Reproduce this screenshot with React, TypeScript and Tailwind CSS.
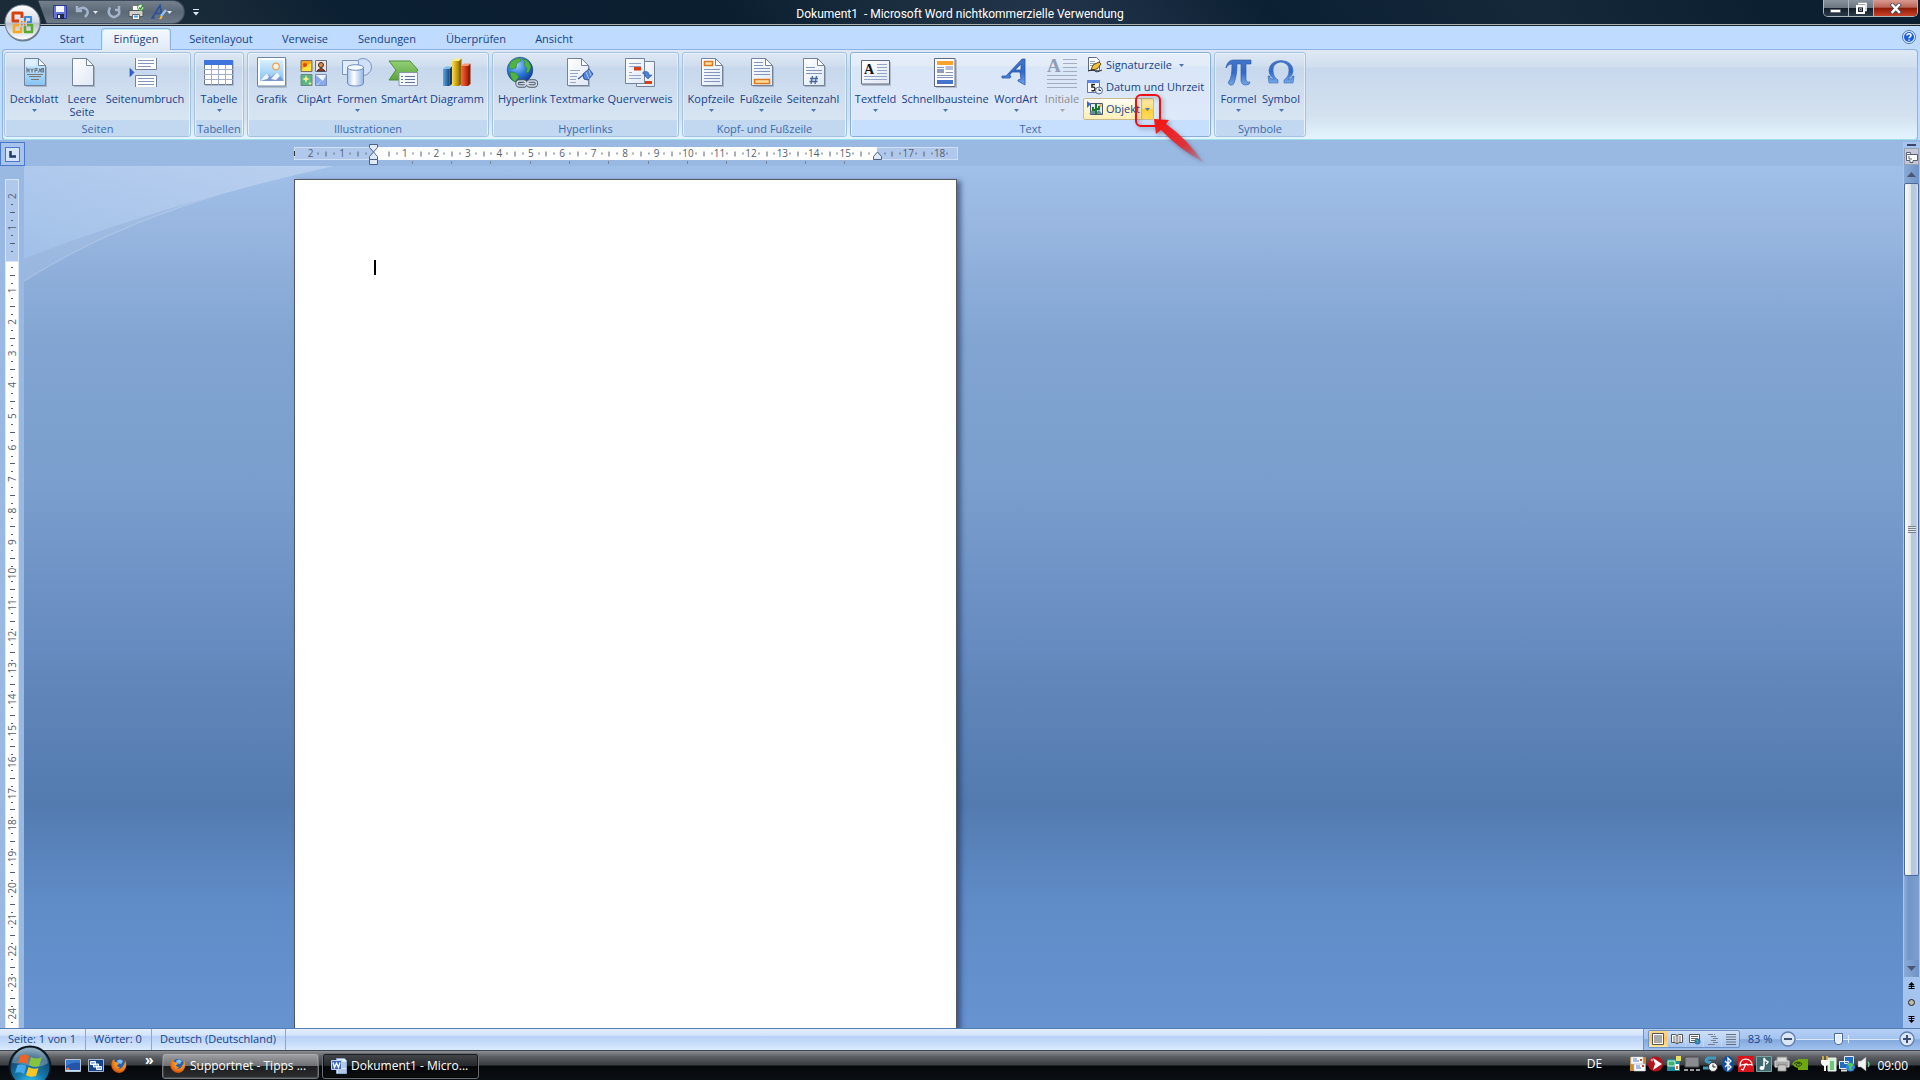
import type { ReactNode } from "react";

const tabs = [
  { label: "Start", width: "w-[58px]" },
  { label: "Einfügen", width: "w-[70px]" },
  { label: "Seitenlayout", width: "w-[100px]" },
  { label: "Verweise", width: "w-[68px]" },
  { label: "Sendungen", width: "w-24" },
  { label: "Überprüfen", width: "w-[82px]" },
  { label: "Ansicht", width: "w-[74px]" },
];

const CM = 31.45;

export default function App() {
  return (
    <div className="flex h-screen flex-col overflow-hidden bg-[#bfdbff] font-['Open_Sans','Noto_Sans',sans-serif] text-[11px] text-[#15428b] select-none">
      <SharedDefs />
      <TitleBar />
      <TabRow />
      <Ribbon />
      <Workspace />
      <StatusBar />
      <Taskbar />
    </div>
  );
}

function SharedDefs() {
  return (
    <svg className="absolute size-0" aria-hidden="true">
      <defs>
        <linearGradient id="paper" x1="0" y1="0" x2="1" y2="1">
          <stop offset="0" stopColor="#fff" />
          <stop offset="1" stopColor="#dfe8f5" />
        </linearGradient>
        <linearGradient id="sky" x1="0" y1="0" x2="0" y2="1">
          <stop offset="0" stopColor="#d9f0ff" />
          <stop offset="1" stopColor="#86c3f3" />
        </linearGradient>
        <linearGradient id="glyph" x1="0" y1="0" x2="0" y2="1">
          <stop offset="0" stopColor="#4476c8" />
          <stop offset="0.5" stopColor="#2f6bcb" />
          <stop offset="1" stopColor="#77a9ea" />
        </linearGradient>
        <linearGradient id="cyl" x1="0" y1="0" x2="1" y2="0">
          <stop offset="0" stopColor="#a9c5ee" />
          <stop offset="0.4" stopColor="#fff" />
          <stop offset="1" stopColor="#8fb2e6" />
        </linearGradient>
        <linearGradient id="green" x1="0" y1="0" x2="0" y2="1">
          <stop offset="0" stopColor="#93cf76" />
          <stop offset="1" stopColor="#5ba53c" />
        </linearGradient>
        <linearGradient id="blueBar" x1="0" y1="0" x2="1" y2="0">
          <stop offset="0" stopColor="#5fa8e6" />
          <stop offset="1" stopColor="#16457e" />
        </linearGradient>
        <linearGradient id="yellowBar" x1="0" y1="0" x2="1" y2="0">
          <stop offset="0" stopColor="#ffe04a" />
          <stop offset="1" stopColor="#a87e00" />
        </linearGradient>
        <linearGradient id="redBar" x1="0" y1="0" x2="1" y2="0">
          <stop offset="0" stopColor="#ff6a40" />
          <stop offset="1" stopColor="#b02305" />
        </linearGradient>
        <radialGradient id="earth" cx="0.38" cy="0.3" r="0.8">
          <stop offset="0" stopColor="#9fd0ff" />
          <stop offset="0.5" stopColor="#2b78dd" />
          <stop offset="1" stopColor="#0a2f86" />
        </radialGradient>
        <radialGradient id="fox" cx="0.6" cy="0.3" r="0.8">
          <stop offset="0" stopColor="#ffc83a" />
          <stop offset="0.6" stopColor="#ee7a16" />
          <stop offset="1" stopColor="#b83c08" />
        </radialGradient>
        <radialGradient id="orb" cx="0.5" cy="0.95" r="0.95">
          <stop offset="0" stopColor="#3ed0f4" />
          <stop offset="0.4" stopColor="#1578ac" />
          <stop offset="0.75" stopColor="#164a70" />
          <stop offset="1" stopColor="#7fa3b8" />
        </radialGradient>
        <linearGradient id="office" x1="0" y1="0" x2="0" y2="1">
          <stop offset="0" stopColor="#fff" />
          <stop offset="0.48" stopColor="#d4dae2" />
          <stop offset="0.52" stopColor="#b6c2d0" />
          <stop offset="1" stopColor="#fff" />
        </linearGradient>
        <linearGradient id="arrowFade" x1="0" y1="0" x2="1" y2="1">
          <stop offset="0" stopColor="#f41212" />
          <stop offset="0.6" stopColor="#ea2a2f" stopOpacity="0.9" />
          <stop offset="1" stopColor="#d04a60" stopOpacity="0.2" />
        </linearGradient>
      </defs>
    </svg>
  );
}

/* ---------- Titelleiste ---------- */

function TitleBar() {
  return (
    <header className="relative z-10 flex h-[26px] shrink-0 border-b border-[#1b242c] bg-[linear-gradient(55deg,#1b2c38_0%,#182a38_12%,#0c2033_18%,#0a1e30_38%,#1c2f40_48%,#22344a_55%,#0c2033_66%,#14283a_80%,#0b1f31_92%)] shadow-[inset_0_-1px_0_#a9b1b2]">
      <button type="button" aria-label="Office-Schaltfläche" className="absolute top-1 left-1">
        <OfficeOrb />
      </button>
      <div className="ml-[38px] flex h-6 w-[147px] items-center rounded-r-full border border-l-0 border-[#39485a] bg-gradient-to-b from-[#74808c] via-[#5b6876] to-[#6d7a88] pl-[15px] [clip-path:polygon(0_0,100%_0,100%_100%,9px_100%)]">
        <button type="button" aria-label="Speichern" className="w-[22px]"><SaveIcon /></button>
        <button type="button" aria-label="Rückgängig" className="flex w-8 items-center gap-1"><UndoIcon /><Caret className="text-[#e4e8ee]" /></button>
        <button type="button" aria-label="Wiederholen" className="w-[21px]"><RedoIcon /></button>
        <button type="button" aria-label="Drucken" className="w-[23px]"><PrintIcon /></button>
        <button type="button" aria-label="Formatvorlage" className="flex items-center"><StyleIcon /><Caret className="text-[#dfe8f8]" /></button>
      </div>
      <button type="button" aria-label="Symbolleiste anpassen" className="ml-2 h-[25px]">
        <svg width="6" height="7" viewBox="0 0 6 7"><path d="M0 .5h6" stroke="#dce6f5" /><path d="M0 3h6L3 6.500z" fill="#dce6f5" /></svg>
      </button>
      <h1 className="pointer-events-none absolute inset-x-0 top-1 text-center font-[Roboto,'Open_Sans',sans-serif] text-[12px] leading-5 whitespace-pre text-white">
        Dokument1  - Microsoft Word nichtkommerzielle Verwendung
      </h1>
      <div className="mr-[2px] ml-auto flex h-[17px] w-[95px] overflow-hidden rounded-b-[5px] border border-t-0 border-[#aeb6bd]">
        <button type="button" aria-label="Minimieren" className="flex w-[25px] items-center justify-center border-r border-[#aeb6bd] bg-[linear-gradient(#89939d_0%,#69757f_50%,#111d29_52%,#2d3c4a_100%)]">
          <svg width="12" height="12"><path d="M.5 7.500h10v3h-10z" fill="#fff" stroke="#4b535c" strokeWidth=".6" /></svg>
        </button>
        <button type="button" aria-label="Verkleinern" className="flex w-[25px] items-center justify-center border-r border-[#aeb6bd] bg-[linear-gradient(#89939d_0%,#69757f_50%,#111d29_52%,#2d3c4a_100%)]">
          <svg width="13" height="13" fill="none"><path d="M4 2.500V1.500h7v7h-1" stroke="#fff" strokeWidth="1.600" /><path d="M2 4h7v7H2z" stroke="#fff" strokeWidth="2" /><path d="M4.500 6.500h2v2h-2z" fill="#222c35" stroke="#fff" strokeWidth=".5" /></svg>
        </button>
        <button type="button" aria-label="Schließen" className="flex flex-1 items-center justify-center bg-[linear-gradient(#d99a8f_0%,#bb6557_45%,#8f1a06_52%,#c8432a_100%)]">
          <svg width="12" height="11"><path d="M2.500 2l6.500 7M9 2L2.500 9" stroke="#434a55" strokeWidth="4" strokeLinecap="square" /><path d="M2.500 2l6.500 7M9 2L2.500 9" stroke="#fff" strokeWidth="2.400" strokeLinecap="square" /></svg>
        </button>
      </div>
    </header>
  );
}

function TabRow() {
  return (
    <nav className="flex h-[23px] shrink-0 pt-[2px] pl-[43px]">
      {tabs.map((tab) => (
        <button
          key={tab.label}
          type="button"
          className={`${tab.width} ${
            tab.label === "Einfügen"
              ? "relative z-10 -mb-px rounded-t-[4px] border border-b-0 border-[#8db2e3] bg-gradient-to-b from-[#f4f9ff] to-[#e1eaf6] shadow-[inset_1px_1px_0_#bff0fb,inset_-1px_0_0_#bff0fb]"
              : "pt-px"
          } flex items-center justify-center whitespace-nowrap`}
        >
          {tab.label}
        </button>
      ))}
      <button type="button" aria-label="Hilfe" className="mr-1 ml-auto flex items-start pt-[2px]">
        <svg width="14" height="14" viewBox="0 0 14 14">
          <circle cx="7" cy="7" r="6.500" fill="#e8f3ff" stroke="#4673c0" />
          <circle cx="7" cy="7" r="5" fill="#1c5fd8" />
          <path d="M5 5.500C5 3.300 9 3.300 9 5.500 9 6.800 7 6.800 7 8.300M7 9.500v1.200" stroke="#fff" strokeWidth="1.500" fill="none" />
        </svg>
      </button>
    </nav>
  );
}

/* ---------- Multifunktionsleiste ---------- */

function Ribbon() {
  return (
    <div className="mr-[2px] ml-[2px] flex h-[91px] shrink-0 gap-[3px] rounded-[4px] border border-[#8db2e3] border-b-[#9fdde9] bg-[linear-gradient(#dfe9f5_0,#d0deee_17px,#c8d8ed_18px,#d3e1ef_66px,#e4f5ff_90px)] px-px pt-[2px] pb-[2px] shadow-[0_1px_0_#8eabcf]">
      <Group label="Seiten" width="w-[187px]">
        <BigButton label="Deckblatt" width="w-14" caret icon={<CoverIcon />} />
        <BigButton label="Leere Seite" width="w-10" icon={<BlankIcon />} />
        <BigButton label="Seitenumbruch" width="w-[86px]" icon={<BreakIcon />} />
      </Group>
      <Group label="Tabellen" width="w-[50px]">
        <BigButton label="Tabelle" width="w-[46px]" caret icon={<TableIcon />} />
      </Group>
      <Group label="Illustrationen" width="w-[242px]">
        <BigButton label="Grafik" width="w-[45px]" icon={<PictureIcon />} />
        <BigButton label="ClipArt" width="w-10" icon={<ClipArtIcon />} />
        <BigButton label="Formen" width="w-[46px]" caret icon={<ShapesIcon />} />
        <BigButton label="SmartArt" width="w-12" icon={<SmartArtIcon />} />
        <BigButton label="Diagramm" width="w-[58px]" icon={<ChartIcon />} />
      </Group>
      <Group label="Hyperlinks" width="w-[187px]">
        <BigButton label="Hyperlink" width="w-[57px]" icon={<HyperlinkIcon />} />
        <BigButton label="Textmarke" width="w-[52px]" icon={<BookmarkIcon />} />
        <BigButton label="Querverweis" width="w-[74px]" icon={<CrossRefIcon />} />
      </Group>
      <Group label="Kopf- und Fußzeile" width="w-[165px]">
        <BigButton label="Kopfzeile" width="w-[54px]" caret icon={<HeaderIcon />} />
        <BigButton label="Fußzeile" width="w-[46px]" caret icon={<FooterIcon />} />
        <BigButton label="Seitenzahl" width="w-[58px]" caret icon={<PageNumberIcon />} />
      </Group>
      <Group label="Text" width="w-[361px]" active>
        <BigButton label="Textfeld" width="w-[47px]" caret icon={<TextBoxIcon />} />
        <BigButton label="Schnellbausteine" width="w-[92px]" caret icon={<QuickPartsIcon />} />
        <BigButton label="WordArt" width="w-[50px]" caret icon={<WordArtIcon />} />
        <BigButton label="Initiale" width="w-[42px]" caret disabled icon={<DropCapIcon />} />
        <div className="flex flex-col pt-px">
          <button type="button" className="flex h-[22px] items-center gap-[3px] px-1">
            <SignatureIcon /> Signaturzeile <Caret className="ml-1 text-[#4a76b4]" />
          </button>
          <button type="button" className="flex h-[22px] items-center gap-[3px] px-1 whitespace-nowrap">
            <DateIcon /> Datum und Uhrzeit
          </button>
          <div className="relative flex h-[22px] w-[71px] rounded-[2px] border border-[#c9b98c] bg-gradient-to-b from-[#fffdf4] to-[#ffeeb4]">
            <button type="button" className="flex flex-1 items-center gap-[3px] pl-[3px]">
              <ObjectIcon /> Objekt
            </button>
            <button type="button" aria-label="Objekt einfügen" className="flex w-3 items-center justify-center border-l border-[#d9b95a] bg-[linear-gradient(#ffe9a8_0%,#ffe17c_48%,#ffcf3e_52%,#ffdb5c_100%)]">
              <Caret className="text-[#4a76b4]" />
            </button>
            <Pointer />
          </div>
        </div>
      </Group>
      <Group label="Symbole" width="w-[92px]">
        <BigButton label="Formel" width="w-[45px]" caret icon={<PiIcon />} />
        <BigButton label="Symbol" width="w-10" caret icon={<OmegaIcon />} />
      </Group>
    </div>
  );
}

function Group({ label, width, active = false, children }: { label: string; width: string; active?: boolean; children: ReactNode }) {
  return (
    <section
      className={`${width} flex shrink-0 flex-col rounded-[3px] border shadow-[inset_0_0_0_1px_rgba(255,255,255,0.45)] ${
        active
          ? "border-[#86aedb] bg-[linear-gradient(#e6eefa_0,#e2ebf8_13px,#d9e6f7_14px,#dfeafa_100%)]"
          : "border-[#a3c2e0] bg-[linear-gradient(rgba(222,232,244,0.8)_0,rgba(207,221,237,0.8)_13px,rgba(199,215,236,0.9)_14px,rgba(216,230,243,0.9)_68px)]"
      }`}
    >
      <div className="flex min-h-0 flex-1 px-px">{children}</div>
      <h2 className={`mx-px h-4 shrink-0 rounded-b-[2px] text-center leading-[18px] whitespace-nowrap text-[#3e6aaa] ${active ? "bg-[#c7dfff]" : "bg-[#c1d8f0]"}`}>{label}</h2>
    </section>
  );
}

function BigButton({
  label,
  width,
  icon,
  caret = false,
  disabled = false,
}: {
  label: string;
  width: string;
  icon: ReactNode;
  caret?: boolean;
  disabled?: boolean;
}) {
  return (
    <button type="button" disabled={disabled} className={`${width} flex shrink-0 flex-col items-center pt-1 leading-[13px] ${disabled ? "text-[#8d8d8d]" : ""}`}>
      {icon}
      <span className={`mt-[3px] ${label.includes(" ") ? "" : "whitespace-nowrap"}`}>{label}</span>
      {caret && <Caret className={`mt-1 ${disabled ? "text-[#a8a8a8]" : "text-[#4a76b4]"}`} />}
    </button>
  );
}

function Caret({ className = "" }: { className?: string }) {
  return (
    <svg width="5" height="3" viewBox="0 0 5 3" className={`shrink-0 ${className}`}>
      <path d="M0 0h5L2.500 3z" fill="currentColor" />
    </svg>
  );
}

function Pointer() {
  return (
    <svg width="72" height="74" viewBox="0 0 72 74" className="pointer-events-none absolute -top-[6px] left-[50px] z-20 drop-shadow-[2px_2px_2px_rgba(0,0,0,0.35)]">
      <rect x="2" y="2" width="24" height="31" rx="5" fill="none" stroke="#f20d12" strokeWidth="2" />
      <path d="M20 26l15 1-3 4q20 14 38 39Q44 55 27 37l-5 4z" fill="url(#arrowFade)" />
    </svg>
  );
}

/* ---------- Arbeitsbereich ---------- */

function Workspace() {
  return (
    <main className="flex min-h-0 flex-1 bg-[#9ab9e2] pt-[2px]">
      <div className="flex min-w-0 flex-1 flex-col">
        <div className="flex h-6 shrink-0">
          <button type="button" aria-label="Tabstopp links" className="flex w-[25px] items-center justify-center border border-[#4a78cc] bg-[#a9c4ec]">
            <span className="flex size-[15px] items-center justify-center border border-[#4a78cc] bg-[#d5e3f6]">
              <svg width="7" height="7"><path d="M1.500 0v5.500H7" stroke="#1f3a68" strokeWidth="2.500" fill="none" /></svg>
            </span>
          </button>
          <HorizontalRuler />
        </div>
        <div className="flex min-h-0 flex-1">
          <div className="w-6 shrink-0 overflow-hidden pt-[13px] pl-[5px]">
            <VerticalRuler />
          </div>
          <div className="relative flex-1 overflow-hidden bg-[linear-gradient(#a0bfe9_0%,#98b6e0_7%,#82a5d2_20%,#7a9ecd_37%,#668bc0_56%,#6186ba_60%,#537bb0_74%,#5f8bc6_85%,#6793d1_100%)]">
            <svg width="310" height="118" viewBox="0 0 310 118" className="absolute top-0 left-0">
              <defs>
                <linearGradient id="swoosh" x1="0" y1="1" x2="1" y2="0">
                  <stop offset="0" stopColor="#a4c3ea" />
                  <stop offset="1" stopColor="#bfd3f1" />
                </linearGradient>
              </defs>
              <path d="M0 0h310Q140 38 0 93z" fill="url(#swoosh)" opacity=".85" />
              <path d="M0 93Q140 38 310 0 115 42 0 115z" fill="#a9c3e6" opacity=".4" />
              <path d="M0 115Q115 42 290 4" fill="none" stroke="#b9cfee" strokeWidth="1.200" opacity=".5" />
            </svg>
            <div className="relative mt-[13px] ml-[270px] flex h-full w-[663px] border border-[#55585f] bg-white pt-20 pl-[79px] shadow-[4px_2px_5px_rgba(30,50,90,0.6)]">
              <span className="h-[15px] w-[2px] bg-black" />
              <textarea aria-label="Dokument" className="h-full w-[500px] resize-none bg-transparent text-[13px] text-black outline-none" />
            </div>
          </div>
        </div>
      </div>
      <ScrollColumn />
    </main>
  );
}

function HorizontalRuler() {
  const origin = 79.5;
  const marks = Array.from({ length: 21 }, (_, i) => i - 2);
  return (
    <svg width="664" height="24" viewBox="0 0 664 24" className="ml-[269px]" fontSize="10" textAnchor="middle" fill="#55606f">
      <rect x=".5" y="5.500" width="663" height="12" fill="#b0c8ec" stroke="#cfe0f6" />
      <rect x="79" y="5" width="504" height="13" fill="#fff" />
      {marks.map((n) => {
        const x = origin + n * CM;
        return (
          <g key={n}>
            {n !== 0 && n !== 16 && n < 19 && <text x={x} y="15">{Math.abs(n)}</text>}
            {n > -2 && n < 19 && <path d={`M${Math.round(x - CM / 4)} 10.500v2`} stroke="#55606f" />}
            {n > -2 && n < 19 && <path d={`M${Math.round(x - CM / 2)} 9.500v5`} stroke="#55606f" />}
            {n < 19 && n !== 0 && <path d={`M${Math.round(x + CM / 4)} 10.500v2`} stroke="#55606f" />}
          </g>
        );
      })}
      <path d="M.5 9v5" stroke="#333" />
      {Array.from({ length: 12 }, (_, i) => (
        <path key={i} d={`M${Math.round(origin + (i + 1) * CM * 1.25) - 0.5} 19v3`} stroke="#7b8797" />
      ))}
      <g fill="#dfe9f7" stroke="#4a6288">
        <path d="M75.500 2.500h8v3l-4 4.500-4-4.500zM75.500 17.500v-3l4-4.500 4 4.500v3zM75.500 17.500h8v5h-8z" />
        <path d="M579.500 17.500v-3l4-4.500 4 4.500v3z" />
      </g>
    </svg>
  );
}

function VerticalRuler() {
  const origin = 80;
  const marks = Array.from({ length: 27 }, (_, i) => i - 2);
  return (
    <svg width="14" height="900" viewBox="0 0 14 900" fontSize="10" textAnchor="middle" fill="#55606f">
      <rect x=".5" y=".5" width="13" height="900" fill="#fff" stroke="#dde8f6" />
      <rect x=".5" y=".5" width="13" height="82" fill="#b0c8ec" stroke="#d6e4f7" />
      {marks.map((n) => {
        const y = origin + n * CM;
        return (
          <g key={n}>
            {n !== 0 && <text transform={`translate(11 ${y}) rotate(-90)`}>{Math.abs(n)}</text>}
            {n !== -2 && <path d={`M6 ${Math.round(y - CM / 4)}.500h2`} stroke="#55606f" />}
            {n !== -2 && <path d={`M5 ${Math.round(y - CM / 2)}.500h5`} stroke="#55606f" />}
            <path d={`M6 ${Math.round(y + CM / 4)}.500h2`} stroke="#55606f" />
          </g>
        );
      })}
    </svg>
  );
}

function ScrollColumn() {
  return (
    <div className="flex w-[17px] shrink-0 flex-col border-l border-[#a9c6ee] bg-[#a5c3ef] pr-px">
      <div className="mx-[3px] mt-[2px] mb-[2px] h-[2px] shrink-0 bg-[#3d4668]" />
      <button type="button" aria-label="Lineal" className="flex h-[17px] items-center justify-center border border-[#9aa0b4] bg-[#c3c9d6]">
        <svg width="12" height="12" fill="#fff" stroke="#5b6076"><path d="M.5 3.500h4v-2h-4zM4 3.500h7.500v6H7v2H4v-2H.500v-6" /><path d="M3 5v3h3" fill="none" /></svg>
      </button>
      <button type="button" aria-label="Nach oben" className="flex h-[18px] items-center justify-center bg-gradient-to-r from-[#8aaad6] to-[#6f93c6]">
        <svg width="9" height="5"><path d="M0 5l4.500-5L9 5z" fill="#4b5674" /></svg>
      </button>
      <div className="flex flex-1 flex-col bg-[linear-gradient(90deg,#8faedb,#7195c6_30%,#7f9fcc)]">
        <div className="flex flex-[892] items-center justify-center rounded-[2px] border border-[#4d679b] bg-[linear-gradient(90deg,#fbfcfe_0%,#dfe5ec_45%,#b7c7dd_50%,#b9c9e0_85%,#dfe9f5_100%)]">
          <div className="h-[7px] w-2 bg-[repeating-linear-gradient(#7d828b_0,#7d828b_1px,#dfe3ea_1px,#dfe3ea_2px)]" />
        </div>
        <div className="flex-[108]" />
      </div>
      <button type="button" aria-label="Nach unten" className="flex h-[17px] items-center justify-center bg-gradient-to-r from-[#8aaad6] to-[#6f93c6]">
        <svg width="9" height="5"><path d="M0 0h9L4.500 5z" fill="#4b5674" /></svg>
      </button>
      <button type="button" aria-label="Vorherige Seite" className="flex h-[17px] items-center justify-center">
        <svg width="7" height="7"><path d="M3.500 0l3 3h-6zM2.500 3h2v1h2L3.500 3l-3 1h2z" /><path d="M3.500 2v4M.5 4.500h6M.5 6.500h6" stroke="#000" /></svg>
      </button>
      <button type="button" aria-label="Browseobjekt auswählen" className="flex h-[17px] items-center justify-center">
        <svg width="7" height="7"><circle cx="3.500" cy="3.500" r="3" fill="#b9b9b0" stroke="#222" /></svg>
      </button>
      <button type="button" aria-label="Nächste Seite" className="flex h-[17px] items-center justify-center">
        <svg width="7" height="7"><path d="M3.500 7l3-3h-6z" /><path d="M3.500 1v4M.5 2.500h6M.5 .5h6" stroke="#000" /></svg>
      </button>
    </div>
  );
}

/* ---------- Statusleiste ---------- */

function StatusBar() {
  return (
    <footer className="flex h-[22px] shrink-0 border-t border-[#567db1] bg-[linear-gradient(#e3eefd_0%,#d3e4fb_30%,#b8d1f6_36%,#c3daf9_60%,#dbe9fc_100%)]">
      <div className="w-[86px] border-r border-[#86a9d6] pl-2 leading-5">Seite: 1 von 1</div>
      <div className="w-[66px] border-r border-[#86a9d6] pl-2 leading-5">Wörter: 0</div>
      <div className="w-[134px] border-r border-[#86a9d6] pl-2 leading-5">Deutsch (Deutschland)</div>
      <div className="ml-auto flex items-center border-l border-[#6b93c9] bg-[linear-gradient(#b5d0f7_0%,#a5c4f0_45%,#83a9dd_52%,#a3c3f0_100%)] pr-[5px] pb-px pl-1">
        <div className="flex h-[18px] rounded-[2px] border border-[#6d93c6] bg-[linear-gradient(#cfe0f7,#a9c6ef)]">
          <button type="button" aria-label="Seitenlayout" className="flex w-[18px] items-center justify-center bg-[linear-gradient(#fbd78c,#ffc152_50%,#ffe6a0)]">
            <svg width="12" height="12"><path d="M.5.5h11v11H.5z" fill="#fff" stroke="#555" /><path d="M2 3h8M2 5h8M2 7h8M2 9h8" stroke="#555" /></svg>
          </button>
          <button type="button" aria-label="Vollbild-Lesemodus" className="flex w-[18px] items-center justify-center border-l border-[#c7daf4]">
            <svg width="12" height="12"><path d="M.5 1.500H4l2 1 2-1h3.500v8H8l-2 1.500-2-1.500H.5zM6 2.500V11" fill="#fff" stroke="#555" /><path d="M2 4h2.500M2 6h2.500M2 8h2.500M7.500 4H10M7.500 6H10M7.500 8H10" stroke="#666" /></svg>
          </button>
          <button type="button" aria-label="Weblayout" className="flex w-[18px] items-center justify-center border-l border-[#c7daf4]">
            <svg width="12" height="12"><path d="M.5 1.500h10v8H.5z" fill="#fff" stroke="#555" /><path d="M2 3.500h7M2 5.500h7M2 7.500h4" stroke="#666" /><circle cx="8.500" cy="8.500" r="3" fill="#2b78b8" /><path d="M7 7l2 1-1 2" stroke="#5ec04e" fill="none" /></svg>
          </button>
          <button type="button" aria-label="Gliederung" className="flex w-[18px] items-center justify-center border-l border-[#c7daf4]">
            <svg width="12" height="12"><path d="M1 1.500h5M7 1.500h1M4 3.500h5M6 5.500h5M4 7.500h5M6 9.500h5M1 11.500h7" stroke="#777f8c" /></svg>
          </button>
          <button type="button" aria-label="Entwurf" className="flex w-[18px] items-center justify-center border-l border-[#c7daf4]">
            <svg width="12" height="12"><path d="M1 1.500h10M1 4h10M1 6.500h10M1 9h10M1 11.500h10" stroke="#666f7c" /></svg>
          </button>
        </div>
        <button type="button" className="w-10 text-center">83 %</button>
        <button type="button" aria-label="Verkleinern">
          <svg width="16" height="16"><circle cx="8" cy="8" r="7" fill="#dbe7f7" stroke="#5f7fb0" strokeWidth="1.300" /><path d="M4 8h8" stroke="#3c4f72" strokeWidth="2" /></svg>
        </button>
        <div className="relative flex w-[103px] items-center">
          <span className="absolute inset-x-0 h-px bg-[#dceafc]" />
          <span className="absolute left-1/2 h-2 w-px bg-[#dceafc]" />
          <input
            type="range"
            aria-label="Zoom"
            defaultValue={40}
            className="relative h-4 w-full appearance-none bg-transparent [&::-webkit-slider-thumb]:h-3 [&::-webkit-slider-thumb]:w-[9px] [&::-webkit-slider-thumb]:appearance-none [&::-webkit-slider-thumb]:rounded-b-[4px] [&::-webkit-slider-thumb]:border [&::-webkit-slider-thumb]:border-[#4b6a9c] [&::-webkit-slider-thumb]:bg-[#e3ecf9] [&::-webkit-slider-thumb]:shadow-[inset_0_0_0_1px_white]"
          />
        </div>
        <button type="button" aria-label="Vergrößern">
          <svg width="16" height="16"><circle cx="8" cy="8" r="7" fill="#dbe7f7" stroke="#5f7fb0" strokeWidth="1.300" /><path d="M4 8h8M8 4v8" stroke="#3c4f72" strokeWidth="2" /></svg>
        </button>
      </div>
    </footer>
  );
}

/* ---------- Taskleiste ---------- */

function Taskbar() {
  return (
    <div className="relative flex h-[30px] shrink-0 items-center border-t border-[#3d4650] bg-[linear-gradient(#8b8f94_0%,#5b5f64_20%,#3a3d41_48%,#05080b_52%,#0a0f14_100%)] text-[12px] text-white">
      <button type="button" aria-label="Start" className="absolute -top-[6px] left-2">
        <StartOrb />
      </button>
      <div className="ml-[65px] flex items-center gap-[7px]">
        <button type="button" aria-label="Desktop anzeigen">
          <svg width="16" height="14"><path d="M.5.500h15v12H.5z" fill="#3a78d0" stroke="#b8c4d2" /><path d="M1 7q7-5 14-3v8H1z" fill="#2555a8" /><circle cx="3" cy="10" r="1.500" fill="#f0742a" /><path d="M1 11.500h14" stroke="#bfe0ff" /></svg>
        </button>
        <button type="button" aria-label="Fenster umschalten">
          <svg width="16" height="14"><path d="M.5.500h15v12H.5z" fill="#16458c" stroke="#a8b6c8" /><path d="M2.500 2.500h5v3h-5zM5.500 5h5v3h-5zM8.500 7.500h5v3h-5z" fill="#8fb8ec" stroke="#fff" /></svg>
        </button>
        <button type="button" aria-label="Firefox"><FirefoxIcon /></button>
      </div>
      <button type="button" aria-label="Weitere" className="mb-3 ml-[18px] h-4 w-2 text-[14px] leading-4 font-bold">»</button>
      <div className="ml-[9px] flex gap-[3px]">
        <button type="button" className="flex h-[26px] w-[157px] items-center gap-1 rounded-[3px] border border-[#74787c] bg-[linear-gradient(#a0a2a5_0%,#6e7073_48%,#1c1e20_52%,#2c2e31_100%)] pl-[7px] shadow-[inset_0_0_0_1px_rgba(255,255,255,0.15)]">
          <FirefoxIcon /> Supportnet - Tipps ...
        </button>
        <button type="button" className="flex h-[26px] w-[157px] items-center gap-1 rounded-[3px] border border-[#6a6e73] bg-[linear-gradient(#45484c_0%,#26282b_48%,#050607_52%,#0c0d0e_100%)] pl-2 shadow-[inset_0_0_0_1px_rgba(0,0,0,0.6)]">
          <svg width="16" height="16"><path d="M5.500.500h8l2 2v13h-10z" fill="#e6eefa" stroke="#8fa9d6" /><path d="M11 5h4M11 7h4M11 9h4M7 12h8M7 14h8" stroke="#7f9fd0" /><path d="M.5 2.500h10v9H.5z" fill="#3c68bd" stroke="#bcd0f0" /><path d="M2 4.500l1.500 5L5.500 5l2 4.500 1.500-5" stroke="#fff" strokeWidth="1.300" fill="none" /></svg>
          Dokument1 - Micro...
        </button>
      </div>
      <button type="button" className="mr-7 mb-1 ml-auto w-4 text-center">DE</button>
      <TrayIcons />
      <time className="mr-3 ml-1 leading-4">09:00</time>
    </div>
  );
}

function TrayIcons() {
  return (
    <div className="flex items-center gap-[2px] pb-1">
      <svg width="16" height="16"><path d="M0 1h16v14H0z" fill="#c98a30" /><path d="M1 1h12v7H1zM4 8h11v7H4z" fill="#fff" stroke="#b9c4d6" strokeWidth=".6" /><path d="M3 3h4M3 5h6M6 10h4M6 12h5" stroke="#4c79c6" /><path d="M10 4h2M12 10h2" stroke="#d8462a" strokeWidth="2" /></svg>
      <svg width="16" height="16"><circle cx="7.500" cy="8" r="7.500" fill="#b4121c" /><path d="M5 2l9 6-9 6 2-6z" fill="#fff" /><circle cx="4" cy="4" r="1.500" fill="#e58a8a" /></svg>
      <svg width="16" height="16"><path d="M1 3h13v12H1z" fill="#1e8c98" /><path d="M2 5h7v5H2z" fill="#36b46c" stroke="#d0f0e6" /><path d="M10 0h5v5h-5z" fill="#e8e06a" /><path d="M9 8h4v6H9z" fill="#fff" /><path d="M10 10h2v3h-2z" fill="#e0662a" /></svg>
      <svg width="16" height="16"><path d="M1 1h14v10H1z" fill="#8a8b8e" stroke="#4a4b4e" /><path d="M0 14h4M6 14h4M12 14h4" stroke="#9b9ca0" strokeWidth="2" /></svg>
      <svg width="16" height="16"><path d="M14 2H6q-4 3 0 4l6 2q2 3-3 4H1" stroke="#3e9ac4" strokeWidth="3" fill="none" /><circle cx="11" cy="11" r="4.500" fill="#f4f4f4" stroke="#333" /><path d="M11 8.500V11h2.500" stroke="#222" fill="none" /></svg>
      <svg width="16" height="16"><ellipse cx="8" cy="8" rx="6" ry="8" fill="#12509c" /><path d="M5 5l6 6-3 3V2l3 3-6 6" stroke="#fff" strokeWidth="1.300" fill="none" /></svg>
      <svg width="16" height="16"><path d="M0 0h16v16H0z" fill="#d8141c" /><path d="M2 10Q2 3 8 3q6 1 6 6-2-1-4 0-2-2-4 0-2-1-4 1zM8 8l-3 6-2-1" stroke="#fff" strokeWidth="1.200" fill="none" /></svg>
      <svg width="16" height="16"><path d="M.5.500h15v15H.5z" fill="#3f6a70" stroke="#7da0a0" /><path d="M8 11V2q1 3 4 4-1 2-2 2" stroke="#fff" strokeWidth="1.500" fill="none" /><ellipse cx="6" cy="12" rx="2.500" ry="2" fill="#fff" /></svg>
      <svg width="16" height="16"><path d="M3 1h10v5H3z" fill="#d9d9d9" stroke="#888" /><path d="M1 5h14v6H1z" fill="#a9a9ab" stroke="#dadada" /><path d="M4 9h8v6H4z" fill="#f4f4f4" stroke="#777" /><path d="M5 11h6M5 13h6" stroke="#999" /></svg>
      <svg width="16" height="16"><path d="M6 3h10v11H6z" fill="#6fa80e" /><path d="M0 8q4-5 8-4t5 4q-3 5-7 4T0 8z" fill="#6fa80e" /><path d="M2 8q4-4 8 0-3 4-6 1 1-3 4-1" stroke="#203a08" fill="none" /></svg>
      <svg width="16" height="16" className="ml-[11px]"><path d="M7 2h8v13H7z" fill="#d7f0d8" stroke="#eee" /><path d="M9 5h4v9H9z" fill="#6fc57a" /><path d="M2 0v5M6 0v5" stroke="#f0c040" strokeWidth="1.500" /><path d="M0 4h8v3q-1 3-3 3v5H3v-5Q1 10 0 7z" fill="#f5f5f5" /></svg>
      <svg width="16" height="16"><path d="M5.500.500h9v7h-9zM.5 5.500h9v7h-9z" fill="#1f6cc0" stroke="#e6eef8" /><path d="M2 14.500h6" stroke="#ddd" strokeWidth="2" /><circle cx="11.500" cy="11" r="4.500" fill="#2a86e0" /><path d="M9 9q3-2 4 0l-2 2 1 3" stroke="#5ccf4a" strokeWidth="2" fill="none" /></svg>
      <svg width="16" height="16"><path d="M1 5h3l5-4v14l-5-4H1z" fill="#f2f2f2" stroke="#888" strokeWidth=".5" /><path d="M11 6q2 2 0 5" stroke="#6fdc8a" strokeWidth="1.300" fill="none" /></svg>
    </div>
  );
}

/* ---------- Symbole ---------- */

function Icon({ children, size = 32 }: { children: ReactNode; size?: number }) {
  return (
    <svg width={size} height={size} viewBox={`0 0 ${size} ${size}`} fill="none" className="shrink-0 overflow-visible">
      {children}
    </svg>
  );
}

function Sheet({ fill = "url(#paper)" }: { fill?: string }) {
  return (
    <>
      <path d="M8 3h14l7 7v20H8z" fill="#000" opacity=".18" />
      <path d="M6.500 1.500h14l7 7v20h-21z" fill={fill} stroke="#74839c" />
      <path d="M20.500 1.500v7h7z" fill="#fff" stroke="#74839c" />
    </>
  );
}

function CoverIcon() {
  return (
    <Icon>
      <Sheet fill="url(#sky)" />
      <path d="M8 3h10v6H8z" fill="#e8f5ff" opacity=".6" />
      <path d="M9 15.500v-4l2 3v-3m1.500 0l1.500 2 1.500-2m-1.500 2v2m3-4h2v2h-2m0-2v4m4-4l2.500 4m0-4L20 15.500m4 0v-4h1.500v4" stroke="#6a7686" strokeWidth="1.100" />
      <path d="M9 17.500h16M11 19.500h12M13 22.500h8" stroke="#7d776f" />
    </Icon>
  );
}

function BlankIcon() {
  return <Icon><Sheet /></Icon>;
}

function BreakIcon() {
  return (
    <Icon>
      <path d="M6.500 1v11.500h21V1" fill="#fff" stroke="#74839c" />
      <path d="M6.500 30V18.500h21V30" fill="#fff" stroke="#74839c" />
      <path d="M9 3.500h16M9 6.500h16M9 9.500h13M9 21.500h16M9 24.500h16M9 27.500h16" stroke="#8296bc" />
      <path d="M1 11.500l4 4-4 4z" fill="#2f62d0" stroke="#1a3f98" strokeWidth=".6" />
    </Icon>
  );
}

function TableIcon() {
  return (
    <Icon>
      <path d="M2 4h29v25H2z" fill="#000" opacity=".15" />
      <path d="M1.500 3.500h28v24h-28z" fill="#fff" stroke="#6b7994" />
      <path d="M1 3h29v5H1z" fill="#3f74dc" />
      <path d="M1 12.500h29M1 17.500h29M1 22.500h29M8.500 8v20M15.500 8v20M22.500 8v20" stroke="#a1adc4" />
    </Icon>
  );
}

function PictureIcon() {
  return (
    <Icon>
      <path d="M2 2h29v29H2z" fill="#000" opacity=".15" />
      <path d="M1.500.500h28v28.500h-28z" fill="#fff" stroke="#6f87a0" />
      <path d="M4 3h23.500v21H4z" fill="url(#sky)" />
      <circle cx="20" cy="9.500" r="3.300" fill="#fff3d8" stroke="#eaa46a" strokeWidth="1.300" />
      <path d="M4 24l7-8 4 4 6-5 7 9z" fill="#7c99d6" />
      <path d="M4 24l7-8 2 4-2 2zM15 22l6-7 3 4-4 4z" fill="#eef5ff" />
    </Icon>
  );
}

function ClipArtIcon() {
  return (
    <Icon>
      <path d="M3 3.500h11v11H3z" fill="#f8a51b" stroke="#7b6c66" />
      <path d="M4 12l9-6v8H4z" fill="#ffe23e" /><circle cx="7" cy="8" r="2" fill="#d84a0c" />
      <path d="M17.500 3.500h11v11h-11z" fill="#f2e4d8" stroke="#64708a" />
      <circle cx="23" cy="8" r="2.500" fill="#d98c4a" stroke="#3c2c25" /><path d="M19 14q4-5 8 0z" fill="#c2401c" stroke="#3c2c25" />
      <path d="M3 17.500h11v11H3z" fill="#5ab488" stroke="#6b8a80" />
      <path d="M8 18l1 3 3 1-3 1-1 3-1-3-3-1 3-1zM12 24l.5 2 1.500.5-1.500.5-.5 1.500-.5-1.500L10 26.500l1.500-.5z" fill="#fff38a" />
      <path d="M17.500 17.500h11v11h-11z" fill="#c3d6fb" stroke="#7b8fb6" />
      <path d="M18 18l6 5-6 5zM28 18v10h-8z" fill="#88a8ec" /><path d="M18 18l7 6 3-6z" fill="#eef4ff" />
    </Icon>
  );
}

function ShapesIcon() {
  return (
    <Icon>
      <circle cx="22" cy="10" r="8.500" fill="#cfe0f8" stroke="#7b95c0" />
      <path d="M1.500 3.500h16v14h-16z" fill="#e2edfb" stroke="#7b95c0" />
      <path d="M6.500 10v16q0 3 8 3t8-3V10z" fill="url(#cyl)" stroke="#6f8cba" />
      <ellipse cx="14.500" cy="10.500" rx="8" ry="2.800" fill="#f4f9ff" stroke="#6f8cba" />
    </Icon>
  );
}

function SmartArtIcon() {
  return (
    <Icon>
      <path d="M1 4h21l8 9-8 10H1l7-10z" fill="url(#green)" stroke="#4f8f38" />
      <path d="M11 15.500h18.500v13H11z" fill="#f4f7fc" stroke="#8b96ac" />
      <path d="M13 19.500h2M13 22.500h2M13 25.500h2M17 19.500h10M17 22.500h10M17 25.500h10" stroke="#64739a" />
    </Icon>
  );
}

function ChartIcon() {
  return (
    <Icon>
      <path d="M2 12l3-2.500h6L8.500 12z" fill="#7fbaf0" />
      <path d="M2 12h6.500v17H2z" fill="url(#blueBar)" /><path d="M8.500 12L11 9.500V27l-2.500 2z" fill="#123a6c" />
      <path d="M11 4l3-2.500h6.500L18 4z" fill="#ffef80" />
      <path d="M11 4h7v25h-7z" fill="url(#yellowBar)" /><path d="M18 4l2.500-2.500V27L18 29z" fill="#8a6600" />
      <path d="M20 9l3-2.500h6.500L27 9z" fill="#ff9470" />
      <path d="M20 9h7v20h-7z" fill="url(#redBar)" /><path d="M27 9l2.500-2.500V27L27 29z" fill="#8c1c05" />
    </Icon>
  );
}

function HyperlinkIcon() {
  return (
    <Icon>
      <circle cx="13" cy="13" r="12.800" fill="url(#earth)" stroke="#123a78" strokeWidth=".6" />
      <path d="M3 6q5-5 10-5l1 3-4 2-1 5-5 1-2-2zM15 2q7 0 9 8l-2 5-3 1 1-5-3-3 1-3zM3 15l6 1 3 4-4 5q-5-3-5-10z" fill="#4fb440" stroke="#2a7c2c" strokeWidth=".5" />
      <g stroke="#4a5666" strokeWidth="3.400"><rect x="10" y="24" width="9" height="5" rx="2.500" /><rect x="20.500" y="24" width="9" height="5" rx="2.500" /><path d="M16 26.500h8" /></g>
      <g stroke="#d3dbe6" strokeWidth="1.500"><rect x="10" y="24" width="9" height="5" rx="2.500" /><rect x="20.500" y="24" width="9" height="5" rx="2.500" /><path d="M16 26.500h8" /></g>
    </Icon>
  );
}

function BookmarkIcon() {
  return (
    <Icon>
      <Sheet />
      <path d="M9 13.500h10M9 16.500h8M9 19.500h7M9 22.500h6M9 25.500h6" stroke="#93a5c8" />
      <path d="M17 22l8-6" stroke="#3f5fa8" strokeWidth="1.500" />
      <path d="M22 17l6-5 4 5-5 6-4-1z" fill="#5584d8" stroke="#2c4f9c" />
      <path d="M25 15l3 7M28 13l2 6" stroke="#a9c6f4" />
    </Icon>
  );
}

function CrossRefIcon() {
  return (
    <Icon>
      <path d="M12.500 4.500h18v25h-18z" fill="url(#paper)" stroke="#74839c" />
      <path d="M20 24h8v3h-8z" fill="#d63f17" />
      <path d="M1.500 1.500h19v25h-19z" fill="url(#paper)" stroke="#74839c" />
      <path d="M5 6.500h12M5 9.500h12M5 15.500h3M5 18.500h12M5 21.500h12" stroke="#93a5c8" />
      <path d="M10 10h7v3.500h-7z" fill="#d63f17" />
      <path d="M19 15q6-2 6 3h3l-4 4-4-4h2q0-2-3-1z" fill="#4c7fd8" stroke="#2a539e" strokeWidth=".6" />
    </Icon>
  );
}

function HeaderIcon() {
  return (
    <Icon>
      <Sheet />
      <path d="M9.500 4.500h8v4h-8z" fill="#ffdca0" stroke="#d97a1e" strokeWidth="1.500" />
      <path d="M9 12.500h16M9 15.500h16M9 18.500h16M9 21.500h16M9 24.500h16" stroke="#8296bc" />
    </Icon>
  );
}

function FooterIcon() {
  return (
    <Icon>
      <Sheet />
      <path d="M9 5.500h9M9 8.500h9M9 11.500h16M9 14.500h16M9 17.500h16" stroke="#8296bc" />
      <path d="M9.500 22.500h15v4h-15z" fill="#ffdca0" stroke="#d97a1e" strokeWidth="1.500" />
    </Icon>
  );
}

function PageNumberIcon() {
  return (
    <Icon>
      <Sheet />
      <path d="M9 10.500h9M9 13.500h16M9 16.500h16" stroke="#8296bc" />
      <path d="M15.500 19l-1.500 8M19.500 19L18 27M13 21.500h8M12.500 24.500h8" stroke="#46649c" strokeWidth="1.300" />
    </Icon>
  );
}

function TextBoxIcon() {
  return (
    <Icon>
      <path d="M2 5h29v24H2z" fill="#000" opacity=".18" />
      <path d="M1.500 3.500h28v23.500h-28z" fill="url(#paper)" stroke="#5d6a80" />
      <text x="4" y="17" fontSize="14" fontWeight="700" fontFamily="Liberation Serif" fill="#111">A</text>
      <path d="M17 7.500h10M17 10.500h10M17 13.500h10M17 16.500h10M4 19.500h23M4 22.500h23" stroke="#93a5c8" />
    </Icon>
  );
}

function QuickPartsIcon() {
  return (
    <Icon>
      <path d="M7 3h21v28H7z" fill="#000" opacity=".18" />
      <path d="M5.500 1.500h20.500v28H5.500z" fill="#fff" stroke="#5d6a80" />
      <path d="M8 4h16v4H8z" fill="#fba22c" />
      <path d="M8 12h7v4H8z" fill="#8e9cc0" /><path d="M16.500 9h7.500v4h-7.500z" fill="#b0bcd8" />
      <path d="M8 10.500h7M16.500 15.500H24M8 18.500h16M8 20.500h16" stroke="#8296bc" />
      <path d="M8 23h16v4H8z" fill="#4474d0" />
    </Icon>
  );
}

function WordArtIcon() {
  return (
    <Icon>
      <path d="M22 2L6 19l-4 0v2h8l1-2h-2l3-4h8l1 7-3 1v1l7 4V2zM21 7v6h-6z" fill="url(#glyph)" stroke="#2c56a4" strokeWidth=".8" />
    </Icon>
  );
}

function DropCapIcon() {
  return (
    <Icon>
      <text x="1" y="15" fontSize="19" fontWeight="700" fontFamily="Liberation Serif" fill="#929db4">A</text>
      <path d="M17 2.500h14M17 6.500h14M17 10.500h14M17 14.500h14M1 18.500h30M1 22.500h30M1 26.500h30M1 30.500h30" stroke="#a5aec0" />
    </Icon>
  );
}

function PiIcon() {
  return (
    <Icon>
      <path d="M3 10Q5 3 10 3h18v4h-5v16q0 3 4 2 0 3-4 3-5 0-5-5V7h-4q0 12-3 19-1 3-4 2-3-2-1-4 3-3 3-17-4 0-6 4z" fill="url(#glyph)" stroke="#2c56a4" strokeWidth=".6" />
    </Icon>
  );
}

function OmegaIcon() {
  return (
    <Icon>
      <path d="M3 19l1 7h9v-3Q8 20 8 13q0-7 8-8 8 1 8 8 0 7-5 10v3h9l1-7h-1.500q-.5 3-3 3H23q5-3 5-9-1-9-12-9.500Q5 4 4 13q0 6 5 9H7.500q-2.500 0-3-3z" fill="url(#glyph)" stroke="#3c68b4" strokeWidth=".6" />
    </Icon>
  );
}

function SignatureIcon() {
  return (
    <Icon size={16}>
      <path d="M1.500.500h8l3 3v10h-11z" fill="#fff" stroke="#5c6c86" />
      <path d="M3 4.500h5M3 6.500h7M3 8.500h4" stroke="#93a5c8" />
      <path d="M4 13l2-5 6-3 2 2-4 5z" fill="#f2c33c" stroke="#5f4a12" />
      <path d="M1 14q6-2 7 0t7-1" stroke="#222" />
    </Icon>
  );
}

function DateIcon() {
  return (
    <Icon size={16}>
      <path d="M.5 1.500h12v12H.5z" fill="#fff" stroke="#5c78b4" /><path d="M0 1h13v3H0z" fill="#5d8ade" />
      <path d="M8 5.500H5v2.500q3-.5 3 2t-3.500 1.500" stroke="#222" strokeWidth="1.500" />
      <circle cx="12" cy="11.500" r="3.500" fill="#e8f0fc" stroke="#53699a" /><path d="M12 9.500v2h2" stroke="#334" />
    </Icon>
  );
}

function ObjectIcon() {
  return (
    <Icon size={16}>
      <path d="M3.500 2.500h12v11h-12z" fill="#dcecf7" stroke="#4c5a6e" />
      <path d="M0 0l4 3-4 4z" fill="#3a6ad0" />
      <path d="M2 13l4-5 3 4 3-3 3 4z" fill="#6b8c9c" />
      <path d="M9 3v10M6 6v3h3M12 5v3H9" stroke="#1b7a2a" strokeWidth="2" />
      <circle cx="13.500" cy="4.500" r="1.300" fill="#f0a030" />
    </Icon>
  );
}

function SaveIcon() {
  return (
    <Icon size={14}>
      <path d="M.5.500h13v13h-12l-1-1z" fill="#6474d8" stroke="#2c3798" />
      <path d="M3 1h8v6H3z" fill="#f4f7ff" /><path d="M4 9h7v5H4z" fill="#20284c" /><path d="M5 10h2v3H5z" fill="#e6ecff" />
    </Icon>
  );
}

function UndoIcon() {
  return <Icon size={14}><path d="M2 1v5h5M2.500 5.500Q7 1 11 4t-1 8" stroke="#a3b4cc" strokeWidth="2.500" /></Icon>;
}

function RedoIcon() {
  return <Icon size={14}><path d="M12 1v4H8M3 2.500Q0 8 4 11t8-2q1-3-1-5" stroke="#a3b4cc" strokeWidth="2.500" /></Icon>;
}

function PrintIcon() {
  return (
    <Icon size={16}>
      <path d="M4.500 1.500h7v5h-7z" fill="#fff" stroke="#777" />
      <path d="M1 6.500h14v6H1z" fill="#cfd0cc" stroke="#54585c" />
      <path d="M4.500 10.500h7v5h-7z" fill="#fff" stroke="#666" /><path d="M6 12.500h4" stroke="#48a0e0" strokeWidth="2" />
      <circle cx="12.500" cy="3.500" r="3" fill="#fff" stroke="#3b9a30" /><path d="M11 3.500l1.500 1.500L15 1.500" stroke="#2d8a22" strokeWidth="1.300" />
    </Icon>
  );
}

function StyleIcon() {
  return (
    <Icon size={16}>
      <path d="M0 14h4M1.500 13.500L9 1.500l2 12M4 9.500h6M8 14h4" stroke="#2c4f98" strokeWidth="1.700" />
      <path d="M15 6l-5 6" stroke="#8fc0f4" strokeWidth="2.500" /><path d="M10 11l2 2q-1 3-4 2z" fill="#f2b23a" />
    </Icon>
  );
}

function FirefoxIcon() {
  return (
    <Icon size={16}>
      <circle cx="8" cy="7.500" r="6.500" fill="#2c5fae" />
      <path d="M6 3q3-3 6 0l-2 3-3-1z" fill="#7ec2f2" />
      <path d="M1 3q-2 6 2 10 5 4 10 0 4-5 1-11 0 4-2 6-1 3-5 3 1-1 2-2-3 0-3-2l2-1Q7 4 4 4L3 1z" fill="url(#fox)" />
    </Icon>
  );
}

function OfficeOrb() {
  return (
    <svg width="38" height="38" viewBox="0 0 38 38" fill="none">
      <circle cx="19" cy="19.500" r="18" fill="#0b1824" opacity=".5" />
      <circle cx="18.500" cy="18.500" r="17.500" fill="url(#office)" stroke="#7d8794" />
      <g strokeLinejoin="round">
        <path d="M15 17H9V9h9v5" stroke="#d8400e" strokeWidth="3" />
        <path d="M21 17v-4h6v5h-4" stroke="#3e8ad8" strokeWidth="2.200" />
        <path d="M15 21h-5v7h7v-5" stroke="#f7a81c" strokeWidth="2.500" />
        <path d="M21 22v6h7v-7h-5" stroke="#5caa2c" strokeWidth="2.500" />
      </g>
      <path d="M17 17h1.500v1.500H17zM20 17h1.500v1.500H20zM17 20h1.500v1.500H17zM20 20h1.500v1.500H20z" fill="#e8791c" />
    </svg>
  );
}

function StartOrb() {
  return (
    <svg width="44" height="36" viewBox="0 0 44 36">
      <circle cx="22" cy="22" r="20.500" fill="url(#orb)" stroke="#0c161e" strokeWidth="2" />
      <path d="M4 18Q8 3 22 3t18 15q-9 6-18 3T4 18z" fill="#fff" opacity=".28" />
      <path d="M12 11q5-3 9 0l-2 8q-4-3-9-1z" fill="#ee6424" />
      <path d="M23 12q5 3 11 0l-3 9q-5 2-10-1z" fill="#86c440" />
      <path d="M9.500 20q5-2 9 1l-2.500 8q-4-3-9-1z" fill="#43a8ea" />
      <path d="M20.500 22q5 3 10 1l-2.500 8q-6 2-10-1z" fill="#fbc624" />
    </svg>
  );
}
